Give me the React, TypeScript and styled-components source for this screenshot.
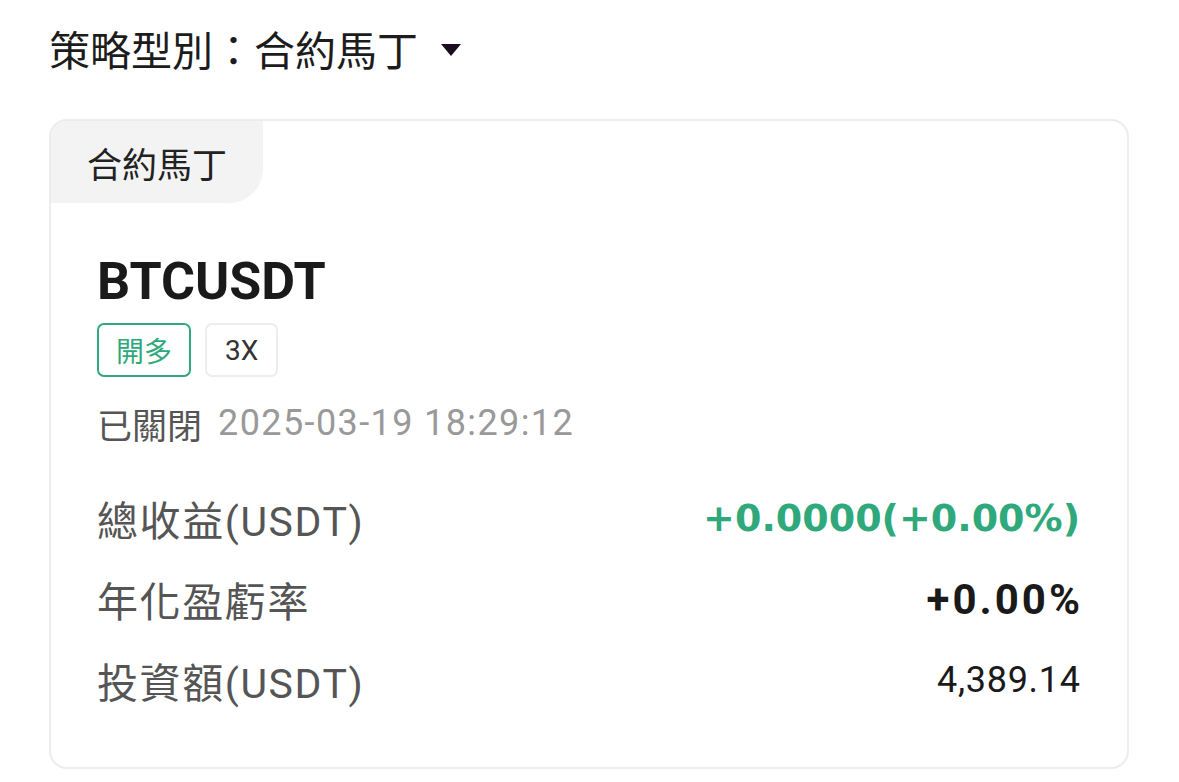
import React from 'react'
import styled, { createGlobalStyle } from 'styled-components'

const GlobalStyle = createGlobalStyle`
  html, body {
    margin: 0;
    padding: 0;
    background: #ffffff;
  }
  body {
    font-family: Roboto, "Noto Sans CJK TC", sans-serif;
    color: #1c1c1c;
  }
`

const Page = styled.div`
  padding: 20px 50px 0 49px;
`

const Header = styled.div`
  display: flex;
  align-items: center;
  height: 56px;
  font-size: 41px;
  color: #1c1c1c;
  font-family: "Noto Sans CJK TC", sans-serif;
`

const Caret = styled.span`
  width: 0;
  height: 0;
  margin-left: 23px;
  margin-top: 4px;
  border-left: 10px solid transparent;
  border-right: 10px solid transparent;
  border-top: 12px solid #1d0c21;
`

const Card = styled.div`
  margin-top: 43px;
  width: 1080px;
  height: 650px;
  box-sizing: border-box;
  border: 2px solid #ececec;
  border-radius: 18px;
  overflow: hidden;
`

const Tab = styled.div`
  width: 212px;
  height: 82px;
  box-sizing: border-box;
  padding-left: 36px;
  display: flex;
  align-items: center;
  background: #f3f3f3;
  border-bottom-right-radius: 34px;
  font-family: "Noto Sans CJK TC", sans-serif;
  font-size: 35px;
  color: #222;
`

const Body = styled.div`
  padding: 49px 47px 0 46px;
`

const Symbol = styled.div`
  font-family: Roboto, sans-serif;
  font-weight: 700;
  font-size: 52px;
  line-height: 60px;
  color: #1a1a1a;
`

const Tags = styled.div`
  display: flex;
  gap: 14px;
  margin-top: 11px;
`

const Tag = styled.span<{ $green?: boolean }>`
  height: 54px;
  box-sizing: border-box;
  padding: 0 ${(p) => (p.$green ? 17 : 18)}px;
  display: flex;
  align-items: center;
  border: 2px solid ${(p) => (p.$green ? '#2fa97b' : '#ededed')};
  border-radius: 7px;
  font-size: 28px;
  color: ${(p) => (p.$green ? '#2fa97b' : '#333')};
  font-family: Roboto, "Noto Sans CJK TC", sans-serif;
`

const Status = styled.div`
  display: flex;
  align-items: center;
  gap: 16px;
  margin-top: 24px;
  height: 44px;
`

const StatusText = styled.span`
  font-family: "Noto Sans CJK TC", sans-serif;
  font-size: 35px;
  color: #555;
`

const DateText = styled.span`
  font-family: Roboto, sans-serif;
  font-size: 36px;
  letter-spacing: 1.4px;
  color: #999;
`

const Rows = styled.div`
  display: flex;
  flex-direction: column;
  gap: 33px;
  margin-top: 49px;
`

const Row = styled.div`
  display: flex;
  align-items: center;
  justify-content: space-between;
  height: 48px;
`

const Label = styled.span`
  font-family: Roboto, "Noto Sans CJK TC", sans-serif;
  font-size: 41px;
  letter-spacing: 1.6px;
  color: #555;
`

const spacing = { green: 0, bold: 3, plain: 0.7 }

const Value = styled.span<{ $tone: 'green' | 'bold' | 'plain' }>`
  font-family: ${(p) => (p.$tone === 'green' ? '"DejaVu Sans"' : 'Roboto')}, sans-serif;
  font-size: ${(p) => (p.$tone === 'plain' ? 36 : p.$tone === 'bold' ? 42 : 38)}px;
  font-weight: ${(p) => (p.$tone === 'plain' ? 400 : 700)};
  letter-spacing: ${(p) => spacing[p.$tone]}px;
  margin-right: -${(p) => spacing[p.$tone]}px;
  color: ${(p) => (p.$tone === 'green' ? '#2fa97b' : '#1a1a1a')};
`

const rows: { label: string; value: string; tone: 'green' | 'bold' | 'plain' }[] = [
  { label: '總收益(USDT)', value: '+0.0000(+0.00%)', tone: 'green' },
  { label: '年化盈虧率', value: '+0.00%', tone: 'bold' },
  { label: '投資額(USDT)', value: '4,389.14', tone: 'plain' },
]

const App: React.FC = () => {
  return (
    <Page>
      <GlobalStyle />
      <Header>
        策略型別：合約馬丁
        <Caret />
      </Header>
      <Card>
        <Tab>合約馬丁</Tab>
        <Body>
          <Symbol>BTCUSDT</Symbol>
          <Tags>
            <Tag $green>開多</Tag>
            <Tag>3X</Tag>
          </Tags>
          <Status>
            <StatusText>已關閉</StatusText>
            <DateText>2025-03-19 18:29:12</DateText>
          </Status>
          <Rows>
            {rows.map((r) => (
              <Row key={r.label}>
                <Label>{r.label}</Label>
                <Value $tone={r.tone}>{r.value}</Value>
              </Row>
            ))}
          </Rows>
        </Body>
      </Card>
    </Page>
  )
}

export default App
